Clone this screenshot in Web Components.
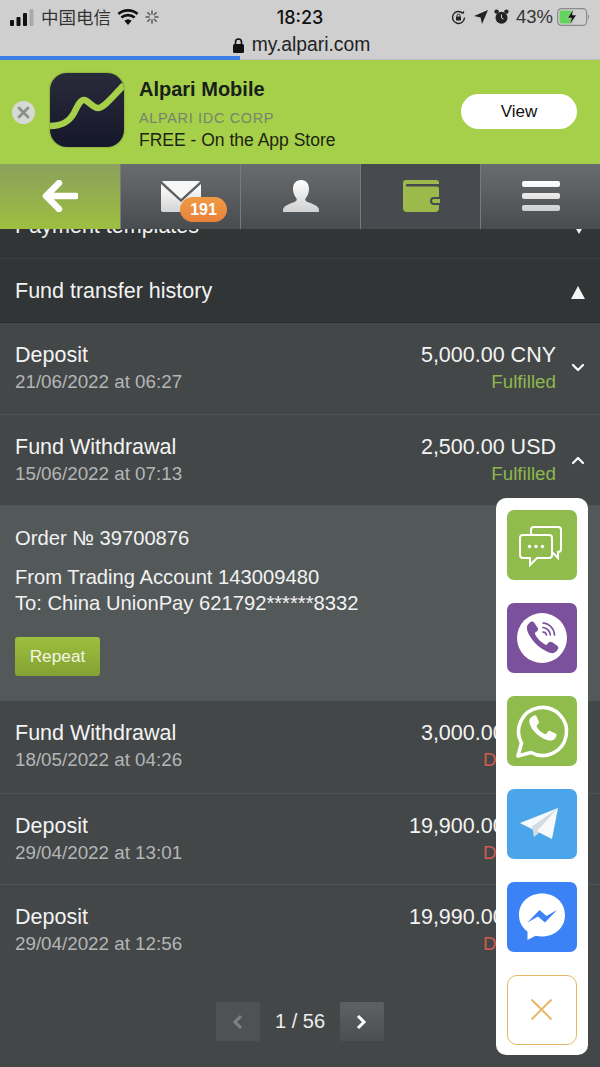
<!DOCTYPE html>
<html>
<head>
<meta charset="utf-8">
<title>Alpari</title>
<style>
    html, body { margin: 0; padding: 0; background: #434748; }
    body { width: 600px; height: 1067px; overflow: hidden; position: relative; font-family: "Liberation Sans", Arial, sans-serif; }
</style>
</head>
<body>
<app-status></app-status>
<smart-banner></smart-banner>
<tab-nav></tab-nav>
<fund-history>
    <history-row title="Deposit" date="21/06/2022 at 06:27" amount="5,000.00 CNY" status="Fulfilled" tone="ok"></history-row>
    <history-row title="Fund Withdrawal" date="15/06/2022 at 07:13" amount="2,500.00 USD" status="Fulfilled" tone="ok" open h="91"></history-row>
    <order-detail></order-detail>
    <history-row title="Fund Withdrawal" date="18/05/2022 at 04:26" amount="3,000.00 USD" status="Declined" tone="bad" h="93"></history-row>
    <history-row title="Deposit" date="29/04/2022 at 13:01" amount="19,900.00 CNY" status="Declined" tone="bad" h="91"></history-row>
    <history-row title="Deposit" date="29/04/2022 at 12:56" amount="19,990.00 CNY" status="Declined" tone="bad" h="91" last></history-row>
    <page-switch></page-switch>
</fund-history>
<chat-panel></chat-panel>

<script>
const define = (name, css, html, setup) => {
    customElements.define(name, class extends HTMLElement {
        connectedCallback(){
            const shadow = this.attachShadow({mode:'open'});
            const content = typeof html == "function" ? html(this) : html;
            shadow.innerHTML = `<style>${css}</style>${content}`;
            if(setup) setup(this, shadow);
        }
    });
};

define('app-status', `
    :host { display: block; height: 60px; background: #cfcfcf; color: #1b1b1b; position: relative; }
    .top { height: 34px; display: grid; grid-template-columns: 1fr auto 1fr; align-items: center; padding: 0 10px; }
    .left, .right { display: flex; align-items: center; }
    .right { justify-content: flex-end; }
    .carrier { font: 17.500px "Noto Sans CJK SC", sans-serif; margin: 0 6px 0 7px; color: #333; line-height: 20px; }
    .time { font: 500 18px Inter, "Liberation Sans", sans-serif; color: #111; }
    .pct { font: 18.500px "Liberation Sans", sans-serif; color: #333; margin: 0 4px 0 7px; }
    svg { display: block; }
    .url { height: 22px; display: flex; justify-content: center; align-items: center; gap: 8px; font: 19.300px "Liberation Sans", sans-serif; color: #222; padding-left: 3px; }
    .load { position: absolute; left: 0; right: 0; bottom: 0; height: 4px; background: linear-gradient(#bdbdbd, #bdbdbd) no-repeat bottom/100% 1px; }
    .load i { display: block; width: 240px; height: 4px; background: #3b7fe6; }
`, `
    <div class="top">
        <div class="left">
            <svg width="24" height="17" viewBox="0 0 24 17"><rect x="0" y="11" width="4" height="6" rx="1" fill="#111"/><rect x="6.500" y="8" width="4" height="9" rx="1" fill="#111"/><rect x="13" y="4" width="4" height="13" rx="1" fill="#111"/><rect x="19.500" y="0" width="4" height="17" rx="1" fill="#aaa"/></svg>
            <span class="carrier">中国电信</span>
            <svg width="22" height="16" viewBox="0 0 22 16"><path d="M11 16l-3.600-4.200a5.500 5.500 0 0 1 7.200 0z" fill="#111"/><path d="M4.400 8.600a10 10 0 0 1 13.200 0M1.400 5a14.600 14.600 0 0 1 19.200 0" fill="none" stroke="#111" stroke-width="2.600"/></svg>
            <svg style="margin-left:6px" width="14" height="14" viewBox="0 0 14 14" stroke="#555" stroke-width="1.500" stroke-linecap="round"><path d="M7 1v3M7 10v3M1 7h3M10 7h3M2.800 2.800l2 2M9.200 9.200l2 2M2.800 11.200l2-2M9.200 4.800l2-2" /></svg>
        </div>
        <div class="time">18:23</div>
        <div class="right">
            <svg width="15" height="15" viewBox="0 0 15 15"><path d="M13.500 7.500a6 6 0 1 1-1.800-4.300" fill="none" stroke="#222" stroke-width="1.400"/><path d="M10.200 3.600l3-.2-.2-2.600z" fill="#222"/><rect x="5" y="6.600" width="5" height="4" rx=".6" fill="#222"/><path d="M6 6.800V5.600a1.500 1.500 0 0 1 3 0v1.200" fill="none" stroke="#222"/></svg>
            <svg style="margin-left:8px" width="14" height="14" viewBox="0 0 14 14"><path d="M14 0L8 14 6.600 7.400 0 6z" fill="#222"/></svg>
            <svg style="margin-left:6px" width="15" height="16" viewBox="0 0 15 16"><circle cx="7.500" cy="8.800" r="6" fill="#222"/><circle cx="2.600" cy="2.600" r="2.200" fill="#222"/><circle cx="12.400" cy="2.600" r="2.200" fill="#222"/><path d="M7.500 5.500v3.500l2 1" stroke="#cfcfcf" fill="none"/></svg>
            <span class="pct">43%</span>
            <svg width="33" height="18" viewBox="0 0 33 18"><rect x=".6" y=".6" width="29" height="16.800" rx="4" fill="none" stroke="#8a8a8a" stroke-width="1.200"/><rect x="2.500" y="2.500" width="13" height="13" rx="2" fill="#64d45f"/><path d="M31 6.500c1.400.4 1.400 4.600 0 5z" fill="#8a8a8a"/><path d="M16.500 1l-6 9h4l-2 7 7-10h-4.200z" fill="#111" stroke="#cfcfcf" stroke-width=".6"/></svg>
        </div>
    </div>
    <div class="url">
        <svg width="11" height="15" viewBox="0 0 11 15"><rect x="0" y="6" width="11" height="9" rx="1.500" fill="#111"/><path d="M2.500 6.500V4a3 3 0 0 1 6 0v2.500" fill="none" stroke="#111" stroke-width="1.600"/></svg>
        <span>my.alpari.com</span>
    </div>
    <div class="load"><i></i></div>
`);

define('smart-banner', `
    :host { display: flex; height: 104px; background: #a7d04a; align-items: center; padding: 0 23px 0 12px; box-sizing: border-box; }
    .close { width: 23px; height: 23px; border-radius: 50%; background: #d6d9d4; flex: none; }
    .close svg { display: block; }
    .logo { flex: none; margin: -4px 0 0 15px; width: 74px; height: 74px; border-radius: 17px; background: linear-gradient(#2a2b3a, #15172a); box-shadow: 0 0 2px rgba(40,50,20,.5); overflow: hidden; }
    .logo svg { display: block; }
    .info { flex: 1; margin-left: 15px; padding-top: 4px; color: #1c2410; }
    .name { font: bold 20px/24px "Liberation Sans", sans-serif; color: #17201a; }
    .corp { font: 14.500px/18px "Liberation Sans", sans-serif; color: #75846a; letter-spacing: .65px; margin-top: 8px; }
    .price { font: 17.500px/22px "Liberation Sans", sans-serif; margin-top: 2px; }
    .view { flex: none; width: 116px; height: 35px; background: #fff; border-radius: 18px; font: 17px/35px "Liberation Sans", sans-serif; color: #111; text-align: center; margin-top: -2px; }
`, `
    <div class="close"><svg width="23" height="23" viewBox="0 0 23 23"><path d="M7 7l9 9M16 7l-9 9" stroke="#8d8f8c" stroke-width="2.800" stroke-linecap="round"/></svg></div>
    <div class="logo"><svg width="74" height="74" viewBox="0 0 74 74"><path d="M0 53c12 0 19-4 24-13 3-6 6-13 10-13 4 0 9 8 14 8 6 0 14-11 26-23" fill="none" stroke="#a7d04a" stroke-width="6.500"/></svg></div>
    <div class="info">
        <div class="name">Alpari Mobile</div>
        <div class="corp">ALPARI IDC CORP</div>
        <div class="price">FREE - On the App Store</div>
    </div>
    <div class="view">View</div>
`);

define('tab-nav', `
    :host { display: grid; grid-template-columns: repeat(5, 1fr); height: 65px; position: relative; z-index: 2; }
    .tab { display: flex; align-items: center; justify-content: center; background: linear-gradient(#696d6f, #484c4f); border-left: 1px solid #777b7d; box-sizing: border-box; position: relative; }
    .tab.back { background: linear-gradient(#8ba05c, #9dbf40); border-left: 0; }
    .tab.now { background: #474b4f; }
    svg { display: block; margin-top: -1px; }
    .badge { position: absolute; left: 59px; top: 33px; width: 47px; height: 25px; border-radius: 13px; background: linear-gradient(#f09a45, #e8823a); color: #fff; font: bold 16px/25px "Liberation Sans", sans-serif; text-align: center; }
`, `
    <div class="tab back"><svg width="36" height="32" viewBox="0 0 36 32"><path d="M17 3L4 16l13 13M5 16h29" fill="none" stroke="#fff" stroke-width="6.500" stroke-linecap="round" stroke-linejoin="round"/></svg></div>
    <div class="tab">
        <svg width="40" height="31" viewBox="0 0 40 31"><defs><linearGradient id="w" x1="0" y1="0" x2="0" y2="1"><stop offset="0" stop-color="#fff"/><stop offset="1" stop-color="#d4d4d4"/></linearGradient></defs><path d="M2 0h36a2 2 0 0 1 1 .4L20 18 1 .4A2 2 0 0 1 2 0z" fill="#f6f6f6"/><path d="M0 3l20 18L40 3v26a2 2 0 0 1-2 2H2a2 2 0 0 1-2-2z" fill="url(#w)"/></svg>
        <div class="badge">191</div>
    </div>
    <div class="tab"><svg width="36" height="32" viewBox="0 0 36 32"><defs><linearGradient id="p" x1="0" y1="0" x2="0" y2="1"><stop offset="0" stop-color="#fff"/><stop offset="1" stop-color="#d0d0d0"/></linearGradient></defs><path d="M18 0c5.500 0 8 4 8 9 0 4-1.500 7-3.500 9.500-.6 1.500 0 2.500 2 3.500 5 2 9 3 11 6 .4 1 .5 2.500.5 4H0c0-1.500.1-3 .5-4 2-3 6-4 11-6 2-1 2.600-2 2-3.500C11.500 16 10 13 10 9c0-5 2.500-9 8-9z" fill="url(#p)"/></svg></div>
    <div class="tab now"><svg width="38" height="32" viewBox="0 0 38 32"><path d="M4 0h30a3 3 0 0 1 3 3v1H5a1.200 1.200 0 0 0 0 2.500h30a2 2 0 0 1 2 2V17h-5a4 4 0 0 0 0 8h5v3a4 4 0 0 1-4 4H5a4 4 0 0 1-4-4V3a3 3 0 0 1 3-3z" fill="#9cb94c"/><path d="M32 19h6v4h-6a2 2 0 0 1 0-4z" fill="#9cb94c"/></svg></div>
    <div class="tab"><svg width="38" height="30" viewBox="0 0 38 30"><defs><linearGradient id="m" gradientUnits="userSpaceOnUse" x1="0" y1="0" x2="0" y2="30"><stop offset="0" stop-color="#fff"/><stop offset="1" stop-color="#cfcfcf"/></linearGradient></defs><path d="M2 0h34a2 2 0 0 1 2 2v2a2 2 0 0 1-2 2H2a2 2 0 0 1-2-2V2a2 2 0 0 1 2-2zM2 12h34a2 2 0 0 1 2 2v2a2 2 0 0 1-2 2H2a2 2 0 0 1-2-2v-2a2 2 0 0 1 2-2zM2 24h34a2 2 0 0 1 2 2v2a2 2 0 0 1-2 2H2a2 2 0 0 1-2-2v-2a2 2 0 0 1 2-2z" fill="url(#m)"/></svg></div>
`);

define('fund-history', `
    :host { display: block; background: #434748; color: #f2f2f2; }
    .cut { height: 30px; background: #313536; overflow: hidden; padding: 0 15px; position: relative; border-bottom: 1px solid #3c4041; box-sizing: border-box; font: 21.500px/24px "Liberation Sans", sans-serif; }
    .cut span { display: block; margin-top: -15px; }
    .cut i { position: absolute; right: 18px; top: 0; width: 0; height: 0; border: 3.500px solid transparent; border-top: 5px solid #eee; border-bottom: 0; }
    .head { height: 64px; background: #313536; display: flex; align-items: center; justify-content: space-between; padding: 0 15px; font: 21.500px/24px "Liberation Sans", sans-serif; border-bottom: 1px solid #2a2d2e; box-sizing: border-box; }
    .head i { width: 0; height: 0; border: 7px solid transparent; border-bottom: 13px solid #f4f4f4; border-top: 0; margin-top: 4px; }
`, `
    <div class="cut"><span>Payment templates</span><i></i></div>
    <div class="head"><span>Fund transfer history</span><i></i></div>
    <slot></slot>
`);

define('history-row', `
    :host { display: flex; box-sizing: border-box; justify-content: space-between; padding: 20px 0 0 15px; border-bottom: 1px solid #505455; background: #434748; position: relative; }
    :host([last]) { border-bottom: 0; }
    .t { font: 21.500px/24px "Liberation Sans", sans-serif; color: #f4f4f4; }
    .d { font: 18.800px/24px "Liberation Sans", sans-serif; color: #b4b6b6; margin-top: 3px; }
    .r { text-align: right; padding-right: 44px; }
    .ok { color: #8cb84c; }
    .bad { color: #cf5b4f; }
    svg { position: absolute; right: 15px; top: 40px; display: block; }
`, (el) => `
    <div>
        <div class="t">${el.getAttribute('title')}</div>
        <div class="d">${el.getAttribute('date')}</div>
    </div>
    <div class="r">
        <div class="t">${el.getAttribute('amount')}</div>
        <div class="d ${el.getAttribute('tone')}">${el.getAttribute('status')}</div>
    </div>
    ${el.getAttribute('tone') == 'ok' ? `<svg width="14" height="10" viewBox="0 0 14 10"><path d="${el.hasAttribute('open') ? 'M2 8l5-5 5 5' : 'M2 2l5 5 5-5'}" fill="none" stroke="#fff" stroke-width="2.200" stroke-linecap="round" stroke-linejoin="round"/></svg>` : ''}
`, (el) => { el.style.height = (el.getAttribute('h') || 92) + "px"; });

define('order-detail', `
    :host { display: block; height: 195px; box-sizing: border-box; background: #535859; padding: 19px 15px 0; color: #f2f2f2; font: 20.200px/26px "Liberation Sans", sans-serif; }
    .from { margin-top: 13px; }
    .btn { margin-top: 21px; width: 85px; height: 39px; border-radius: 3px; background: linear-gradient(#9dbe3f, #83a233); color: #f2f6e4; font: 17.300px/39px "Liberation Sans", sans-serif; text-align: center; }
`, `
    <div>Order № 39700876</div>
    <div class="from">From Trading Account 143009480<br>To: China UnionPay 621792******8332</div>
    <div class="btn">Repeat</div>
`);

define('page-switch', `
    :host { display: flex; justify-content: center; align-items: center; margin-top: 26px; color: #eee; font: 20px "Liberation Sans", sans-serif; width: 600px; padding-left: 0; }
    .b { width: 44px; height: 39px; border-radius: 2px; background: linear-gradient(#5d6163, #4b4f51); display: flex; align-items: center; justify-content: center; }
    .b.off { background: #4e5254; }
    .b:last-child svg { margin-left: -3px; }
    span { width: 80px; text-align: center; }
`, `
    <div class="b off"><svg width="12" height="16" viewBox="0 0 12 16"><path d="M9 2L3 8l6 6" fill="none" stroke="#7e8284" stroke-width="3"/></svg></div>
    <span>1 / 56</span>
    <div class="b"><svg width="12" height="16" viewBox="0 0 12 16"><path d="M3 2l6 6-6 6" fill="none" stroke="#fff" stroke-width="3"/></svg></div>
`);

define('chat-panel', `
    :host { position: absolute; left: 496px; top: 498px; width: 92px; height: 557px; box-sizing: border-box; background: #fff; border-radius: 10px; padding: 12px 11px; display: flex; flex-direction: column; gap: 23px; z-index: 3; }
    .i { width: 70px; height: 70px; border-radius: 7px; flex: none; overflow: hidden; }
    svg { display: block; }
    .close { box-sizing: border-box; border: 1.500px solid #e6b765; border-radius: 10px; }
`, `
    <div class="i" style="background:#8fbc4d"><svg width="70" height="70" viewBox="0 0 70 70" fill="none" stroke="#fff" stroke-width="2"><path d="M24 24v-4a3 3 0 0 1 3-3h24a3 3 0 0 1 3 3v19a3 3 0 0 1-3 3v6l-6-6h-1"/><path d="M16 25h26a3 3 0 0 1 3 3v17a3 3 0 0 1-3 3H30l-7 7v-7h-7a3 3 0 0 1-3-3V28a3 3 0 0 1 3-3z"/><g fill="#fff" stroke="none"><circle cx="22.500" cy="36.500" r="1.700"/><circle cx="29" cy="36.500" r="1.700"/><circle cx="35.500" cy="36.500" r="1.700"/></g></svg></div>
    <div class="i" style="background:#7b519d"><svg width="70" height="70" viewBox="0 0 70 70"><circle cx="35" cy="35" r="25" fill="#fff"/><path d="M22 20c2-2 4-2 5-.6l3.500 5c1 1.400.6 2.800-.6 3.800l-1.500 1.200c-.6.600-.6 1.400-.2 2.200 2 4 5.800 7.800 9.800 10 .9.400 1.600.3 2.200-.3l1.400-1.700c1-1.100 2.400-1.300 3.700-.4l5 3.500c1.400 1 1.300 3.100-.4 5-2 2.300-4.400 3-7 2-7-2.600-14.400-8-19-15-2.500-3.800-4-7-4-10 0-2 1-3.500 2.600-4.700z" fill="#7b519d"/><path d="M36 20c6 .3 11 5 11.500 12M36 24.500c4 .3 7 3.500 7.300 7.500M36 29c2 .2 3.200 1.500 3.400 3" fill="none" stroke="#7b519d" stroke-width="1.700" stroke-linecap="round"/></svg></div>
    <div class="i" style="background:#8fbc4d"><svg width="70" height="70" viewBox="0 0 70 70"><path d="M11 60l3.500-13A24 24 0 1 1 24 56.500z" fill="none" stroke="#fff" stroke-width="3.600" stroke-linejoin="round"/><path d="M26 20c1-1 2.500-1.200 3.200-.2l2.600 5.800c.3.800 0 1.500-.5 2.100l-1.500 1.800c-.4.500-.4 1 0 1.600 1.900 3.200 4.700 5.600 8 7 .6.300 1.100.2 1.500-.3l2-2.500c.5-.6 1.200-.7 1.900-.4l5.400 2.600c.8.400 1 1 .8 1.900-.5 3.500-3.500 5.400-7 5.200-8-.8-18.500-9.800-20-18-.5-2.900.8-5 3.600-6.600z" fill="#fff"/></svg></div>
    <div class="i" style="background:#4aa5ea"><svg width="70" height="70" viewBox="0 0 70 70"><path d="M13 34L51 19 45 50 31 43z" fill="#f7f9fb"/><path d="M13 34l12 3.500L51 19 30 42z" fill="#f1f4f7"/><path d="M25 37.500L27 48l5.500-4.500L30 42l21-23z" fill="#d3dce3"/></svg></div>
    <div class="i" style="background:#3b82f6"><svg width="70" height="70" viewBox="0 0 70 70"><path d="M35 11.500c13 0 23 9 23 21.500s-10 21.500-23 21.500c-2.300 0-4.500-.3-6.500-.8L20.500 58v-8.500C15 45.500 12 39.800 12 33c0-12.500 10-21.500 23-21.500z" fill="#fff"/><path d="M20.500 40.500l12-12.500 7 6 10.500-6-12 12.500-7-6z" fill="#3b82f6"/></svg></div>
    <div class="i close"><svg width="67" height="67" viewBox="0 0 67 67"><path d="M23.500 23.500l20 20M43.500 23.500l-20 20" stroke="#e6b765" stroke-width="2"/></svg></div>
`);
</script>
</body>
</html>
